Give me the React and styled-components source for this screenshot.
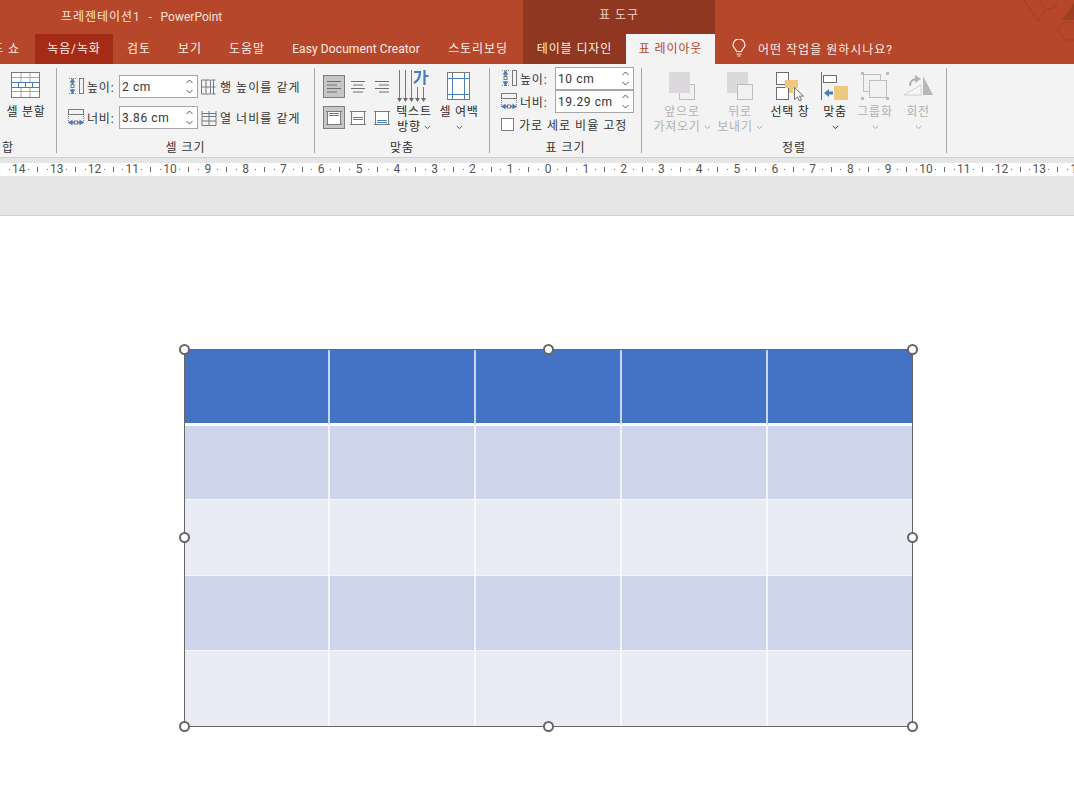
import React from 'react';
import styled, { createGlobalStyle } from 'styled-components';

const GlobalStyle = createGlobalStyle`
  html, body { margin: 0; padding: 0; height: 100%; overflow: hidden; background: #fff; }
  body { font-family: Roboto, 'Noto Sans CJK KR', sans-serif; font-size: 12px; color: #333; }
`;

const Page = styled.div`
  width: 1074px;
  height: 786px;
  overflow: hidden;
  display: flex;
  flex-direction: column;
`;

/* title + tabs */
const Head = styled.div`
  position: relative;
  background: #b7472a;
  height: 64px;
  overflow: hidden;
  flex: none;
`;
const TitleRow = styled.div`
  display: flex;
  height: 34px;
`;
const DocTitle = styled.div`
  width: 462px;
  padding-left: 61px;
  line-height: 34px;
  color: #f6e3dc;
  letter-spacing: 0.95px;
  white-space: pre;
`;
const AppName = styled.span`
  letter-spacing: 0;
`;
const ContextHead = styled.div`
  width: 192px;
  background: #8f3720;
  color: #f0cfc4;
  text-align: center;
  line-height: 30px;
  letter-spacing: 1px;
`;
const TabRow = styled.div`
  display: flex;
  height: 30px;
`;
const Tab = styled.div`
  width: ${p => p.$w}px;
  flex: none;
  display: flex;
  justify-content: ${p => p.$end ? 'flex-end' : 'center'};
  line-height: 30px;
  white-space: nowrap;
  overflow: hidden;
  color: ${p => p.$active ? '#b7472a' : '#fbeee9'};
  letter-spacing: ${p => p.$latin ? '0.1px' : '0.9px'};
  background: ${p => p.$active ? '#f3f3f3' : p.$record ? '#a42c17' : p.$context ? '#8f3720' : 'transparent'};
`;
const TellMe = styled.div`
  display: flex;
  align-items: center;
  gap: 12px;
  padding: 0 0 2px 17px;
  color: #fbeee9;
  letter-spacing: 1px;
`;
const Deco = styled.svg`
  position: absolute;
  right: 0;
  top: 0;
`;

/* ribbon */
const Ribbon = styled.div`
  display: flex;
  flex: none;
  height: 94px;
  box-sizing: border-box;
  background: #f3f3f3;
  border-bottom: 1px solid #cfcfcf;
`;
const Group = styled.div`
  width: ${p => p.$w}px;
  flex: none;
  box-sizing: border-box;
  height: 85px;
  margin-top: 4px;
  display: flex;
  flex-direction: column;
  border-right: 1px solid #a9a9a9;
`;
const GroupBody = styled.div`
  flex: 1;
  display: flex;
  padding-left: ${p => p.$pl || 0}px;
  min-height: 0;
`;
const GroupLabel = styled.div`
  height: 17px;
  line-height: 25px;
  display: flex;
  justify-content: ${p => p.$end ? 'flex-end' : 'center'};
  color: #333;
  letter-spacing: 1px;
  padding-right: ${p => p.$end ? '42px' : '0'};
  white-space: nowrap;
  overflow: ${p => p.$end ? 'hidden' : 'visible'};
`;
const Stack = styled.div`
  display: flex;
  flex-direction: column;
  margin-top: ${p => p.$mt || 0}px;
  padding-top: ${p => p.$pt || 0}px;
  gap: ${p => p.$gap || 0}px;
`;
const FieldRow = styled.div`
  display: flex;
  align-items: center;
  height: 23px;
`;
const IconSlot = styled.span`
  width: 19px;
  flex: none;
  display: flex;
  align-items: center;
  margin-left: ${p => p.$ml || 0}px;
`;
const FieldLabel = styled.span`
  width: ${p => p.$w || 32}px;
  flex: none;
  letter-spacing: 0.8px;
  white-space: nowrap;
`;
const Spinner = styled.div`
  width: 79px;
  height: 23px;
  box-sizing: border-box;
  flex: none;
  border: 1px solid #a6a6a6;
  background: #fff;
  display: flex;
  align-items: center;
  justify-content: space-between;
  padding: 0 3px 0 2px;
  color: #333;
  letter-spacing: 0.6px;
`;
const SpinArrows = styled.svg`
  flex: none;
`;
const EqualLabel = styled.span`
  letter-spacing: 1.05px;
  white-space: nowrap;
`;
const AlignGrid = styled.div`
  display: grid;
  grid-template-columns: repeat(3, 22px);
  grid-auto-rows: 23px;
  column-gap: 2px;
  row-gap: 8px;
  padding-top: 7px;
  width: 70px;
  flex: none;
`;
const AlignCell = styled.div`
  box-sizing: border-box;
  display: flex;
  align-items: center;
  justify-content: center;
  border: 1px solid ${p => p.$on ? '#7f7f7f' : 'transparent'};
  background: ${p => p.$on ? '#c6c6c6' : 'transparent'};
`;
const BigBtn = styled.div`
  width: ${p => p.$w}px;
  flex: none;
  display: flex;
  flex-direction: column;
  align-items: center;
  color: ${p => p.$off ? '#b1b1b1' : '#2b2b2b'};
`;
const BigIcon = styled.div`
  height: ${p => 37 - (p.$pt ?? 4)}px;
  padding-top: ${p => p.$pt ?? 4}px;
  display: flex;
  align-items: flex-start;
  justify-content: center;
`;
const BigText = styled.div`
  line-height: 15px;
  letter-spacing: 0.75px;
  white-space: nowrap;
  display: flex;
  align-items: center;
  gap: 3px;
  height: 15px;
`;
const Check = styled.span`
  width: 13px;
  height: 13px;
  box-sizing: border-box;
  border: 1px solid #7f7f7f;
  background: #fff;
  flex: none;
  margin-right: 5px;
`;
const CheckLabel = styled.span`
  letter-spacing: 1px;
  white-space: nowrap;
`;

/* ruler */
const RulerBand = styled.div`
  flex: none;
  height: 18px;
  box-sizing: border-box;
  padding-top: 5px;
  background: #e6e6e6;
`;
const RulerStrip = styled.div`
  height: 13px;
  background: #fff;
  overflow: hidden;
  display: flex;
  justify-content: center;
  padding-left: 22px;
`;
const RulerCell = styled.div`
  flex: none;
  width: 37.8px;
  height: 13px;
  position: relative;
  display: flex;
  align-items: center;
  justify-content: center;
  font-size: 12px;
  line-height: 13px;
  color: #555;
`;
const RulerMark = styled.i`
  position: absolute;
  left: ${p => p.$x}px;
  top: ${p => p.$tick ? 4 : 6}px;
  width: 1px;
  height: ${p => p.$tick ? 5 : 1}px;
  background: #6a6a6a;
`;
const GreyBand = styled.div`
  flex: none;
  height: 40px;
  box-sizing: border-box;
  background: #e6e6e6;
  border-bottom: 1px solid #d4d4d4;
`;

/* slide */
const Canvas = styled.div`
  flex: 1;
  background: #fff;
  padding: 133px 0 0 184px;
`;
const TableFrame = styled.div`
  position: relative;
  width: 729px;
  height: 378px;
  box-sizing: border-box;
  border: 1px solid #666;
`;
const SlideTable = styled.div`
  display: grid;
  width: 100%;
  height: 100%;
  grid-template-columns: 145px 146px 146px 146px 1fr;
  grid-template-rows: 76px 74px 76px 75px 1fr;
`;
const Cell = styled.div`
  box-sizing: border-box;
  background: ${p => p.$bg};
  border-right: ${p => p.$last ? 'none' : '2px solid rgba(255, 255, 255, 0.7)'};
  border-bottom: ${p => p.$head ? '3px solid #fff' : p.$end ? 'none' : '1px solid #f4f5fa'};
`;
const Handle = styled.span`
  position: absolute;
  left: calc(${p => p.$x}% + ${p => p.$x === 100 ? 1 : 0}px);
  top: calc(${p => p.$y}% + ${p => p.$y === 100 ? 1 : 0}px);
  width: 11px;
  height: 11px;
  margin: -6px 0 0 -6px;
  box-sizing: border-box;
  border-radius: 50%;
  background: #fff;
  border: 2px solid #666;
`;

const GREY = '#7b7b7b';
const BLUE = '#4a7ebb';
const GOLD = '#edc87e';
const OFF = '#dcd9dc';
const OFFL = '#f3f0f4';
const OFFB = '#bdbdbd';

const Chevron = ({ color = '#555' }) => (
  <svg width="7" height="5" viewBox="0 0 7 5" fill="none">
    <path d="M.8 1l2.700 2.600L6.200 1" stroke={color} strokeWidth="1" />
  </svg>
);

const Arrows = () => (
  <SpinArrows width="9" height="17" viewBox="0 0 9 17" fill="none" stroke="#555">
    <path d="M1.500 5L4.500 2l3 3M1.500 12l3 3 3-3" />
  </SpinArrows>
);

const HeightIcon = () => (
  <svg width="16" height="17" viewBox="0 0 16 17" fill="none">
    <rect x="11.500" y=".5" width="4" height="15" stroke={GREY} />
    <path d="M1 .5h8M1 15.500h8" stroke={GREY} strokeDasharray="1 1" />
    <path d="M4.500 1v5M4.500 11v5" stroke={BLUE} strokeWidth="2" />
    <path d="M1.500 4.500l3-4 3 4zM1.500 11.500l3 4 3-4z" fill={BLUE} />
    <rect x="3" y="6.500" width="3" height="3" stroke={GREY} />
  </svg>
);

const WidthIcon = () => (
  <svg width="16" height="17" viewBox="0 0 16 17" fill="none">
    <rect x=".5" y=".5" width="15" height="5" stroke={GREY} />
    <path d="M.5 7v7M15.500 7v7" stroke={GREY} strokeDasharray="1 1" />
    <path d="M1 13.500h5M10 13.500h5" stroke={BLUE} strokeWidth="2" />
    <path d="M4.500 10.500l-4 3 4 3zM11.500 10.500l4 3-4 3z" fill={BLUE} />
    <rect x="6.500" y="12" width="3" height="3" stroke={GREY} />
  </svg>
);

const EqualRowIcon = () => (
  <svg width="16" height="16" viewBox="0 0 16 16" fill="none">
    <path d="M.5 1v14h9V1zM.5 8h9M5 1v14" stroke={GREY} />
    <path d="M12.500 1v14M10.500 1h4M10.500 15h4M10.500 8h4" stroke={BLUE} />
  </svg>
);

const EqualColIcon = () => (
  <svg width="16" height="16" viewBox="0 0 16 16" fill="none">
    <path d="M1 6.500v9h14v-9zM1 11h14M8 6.500v9" stroke={GREY} />
    <path d="M1 3.500h14M1 1v5M8 1v5M15 1v5" stroke={BLUE} />
  </svg>
);

const SplitIcon = () => (
  <svg width="30" height="26" viewBox="0 0 30 26" fill="none">
    <rect x=".5" y=".5" width="28" height="25" fill="#fff" stroke={GREY} />
    <path d="M1 5.500h27M1 19.500h27M10 1v10M19 1v10M10 16v9M19 16v9" stroke="#a6a6a6" />
    <rect x=".5" y="10.500" width="28" height="5" fill="#fff" stroke={BLUE} />
    <path d="M7.500 11v4M14.500 11v4M21.500 11v4" stroke={BLUE} />
  </svg>
);

const LinesIcon = ({ align }) => {
  const lines = align === 'left'
    ? ['M3 4.500h14', 'M3 8h10', 'M3 11.500h14', 'M3 15h10']
    : align === 'center'
      ? ['M3 4.500h14', 'M5 8h10', 'M3 11.500h14', 'M5 15h10']
      : ['M3 4.500h14', 'M7 8h10', 'M3 11.500h14', 'M7 15h10'];
  return (
    <svg width="20" height="19" viewBox="0 0 20 19" fill="none" stroke="#6e6e6e">
      {lines.map(d => <path key={d} d={d} />)}
    </svg>
  );
};

const VAlignIcon = ({ pos }) => {
  const y = pos === 'top' ? 3 : pos === 'mid' ? 7 : 10;
  return (
    <svg width="16" height="16" viewBox="0 0 16 16" fill="none">
      <rect x="1.500" y="1.500" width="13" height="13" fill="#fff" stroke={GREY} />
      <path d="M0 1.500h3M13 1.500h3M0 14.500h3M13 14.500h3" stroke={GREY} />
      <path d={`M3 ${y}.5h10M3 ${y + 2}.5h10`} stroke={BLUE} />
    </svg>
  );
};

const TextDirIcon = () => (
  <svg width="34" height="33" viewBox="0 0 34 33" fill="none">
    {[2, 8, 14, 20, 26].map((x, i) => (
      <g key={x}>
        <path d={`M${x + 0.5} ${i < 3 ? 0 : 17}V30`} stroke="#7a7a7a" />
        <path d={`M${x - 2} 28l2.500 4 2.500-4z`} fill="#6a6a6a" />
      </g>
    ))}
    <path d="M17 2h6c0 5-2 9-6 11M27.500 0v15M27.500 6h4" stroke={BLUE} strokeWidth="2.200" />
  </svg>
);

const MarginIcon = () => (
  <svg width="24" height="28" viewBox="0 0 24 28" fill="none">
    <rect x=".5" y=".5" width="22" height="27" fill="#fff" stroke={GREY} />
    <path d="M1 6.500h21M1 22.500h21M5.500 1v26M17.500 1v26" stroke={BLUE} />
  </svg>
);

const ForwardIcon = () => (
  <svg width="27" height="29" viewBox="0 0 27 29" fill="none">
    <rect x="10.500" y="12.500" width="15" height="15" fill={OFFL} stroke={OFFB} />
    <rect x="0" y="0" width="21" height="21" fill={OFF} />
  </svg>
);

const BackwardIcon = () => (
  <svg width="27" height="29" viewBox="0 0 27 29" fill="none">
    <rect x="0" y="0" width="21" height="21" fill={OFF} />
    <rect x="10.500" y="12.500" width="15" height="15" fill={OFFL} stroke={OFFB} />
  </svg>
);

const SelectionIcon = () => (
  <svg width="29" height="29" viewBox="0 0 29 29" fill="none">
    <rect x=".5" y=".5" width="12" height="12" fill="#fff" stroke="#6e6e6e" />
    <rect x=".5" y="15.500" width="12" height="12" fill="#fff" stroke="#6e6e6e" />
    <path d="M9 8h13v8h-5v5h-4v-5H9z" fill={GOLD} />
    <path d="M18.500 15.500v12l3-2.600 2 4.200 2-1-2-4h4z" fill="#fff" stroke="#6e6e6e" />
  </svg>
);

const AlignIcon = () => (
  <svg width="28" height="29" viewBox="0 0 28 29" fill="none">
    <path d="M.5 0v28" stroke="#6e6e6e" />
    <rect x="2.500" y="3.500" width="13" height="7" fill="#fff" stroke="#6e6e6e" />
    <rect x="13" y="14" width="14" height="14" fill={GOLD} />
    <path d="M3 21l5-4v2.500h4v3H8V25z" fill={BLUE} />
  </svg>
);

const GroupIcon = () => (
  <svg width="28" height="29" viewBox="0 0 28 29" fill="none">
    <rect x="2.500" y="2.500" width="17" height="17" fill={OFFL} stroke={OFFB} />
    <rect x="8.500" y="8.500" width="17" height="17" fill={OFFL} stroke={OFFB} />
    <path d="M0 0h3v3H0zM25 0h3v3h-3zM0 25h3v3H0zM25 25h3v3h-3z" fill={OFFB} />
  </svg>
);

const RotateIcon = () => (
  <svg width="31" height="24" viewBox="0 -3 31 24" fill="none">
    <path d="M1 20l17-10v10z" fill="#f7f7f7" stroke="#d0d0d0" />
    <path d="M20 1v19h10z" fill="#b8b8b8" />
    <path d="M7 11c0-5 3-7 7-7" stroke="#b5b5b5" strokeWidth="2" />
    <path d="M12 0l6 4-6 4z" fill="#b5b5b5" />
  </svg>
);

const Bulb = () => (
  <svg width="14" height="18" viewBox="0 0 14 18" fill="none" stroke="#fbeee9" strokeWidth="1.200">
    <path d="M4.500 12.500C4.200 10 1 9 1 6a6 6 0 0112 0c0 3-3.200 4-3.500 6.500z" />
    <path d="M4.500 15h5M5.500 17h3" />
  </svg>
);

const ruler = [];
for (let i = 15; i >= 1; i--) ruler.push(i);
for (let i = 0; i <= 15; i++) ruler.push(i);

const rows = [
  { bg: '#4472c4', head: true },
  { bg: '#cfd5ea' },
  { bg: '#e9ebf5' },
  { bg: '#cfd5ea' },
  { bg: '#e9ebf5', end: true },
];

const handles = [
  [0, 0], [50, 0], [100, 0],
  [0, 50], [100, 50],
  [0, 100], [50, 100], [100, 100],
];

export default function App() {
  return (
    <Page>
      <GlobalStyle />
      <Head>
        <TitleRow>
          <DocTitle>프레젠테이션1  -  <AppName>PowerPoint</AppName></DocTitle>
          <ContextHead>표 도구</ContextHead>
        </TitleRow>
        <TabRow>
          <Tab $w={20} $end>드 쇼</Tab>
          <Tab $w={15} />
          <Tab $w={78} $record>녹음/녹화</Tab>
          <Tab $w={52}>검토</Tab>
          <Tab $w={50}>보기</Tab>
          <Tab $w={64}>도움말</Tab>
          <Tab $w={154} $latin>Easy Document Creator</Tab>
          <Tab $w={90}>스토리보딩</Tab>
          <Tab $w={103} $context>테이블 디자인</Tab>
          <Tab $w={89} $active>표 레이아웃</Tab>
          <TellMe><Bulb />어떤 작업을 원하시나요?</TellMe>
        </TabRow>
        <Deco width="50" height="42" viewBox="0 0 50 42" fill="none" stroke="#a5401f" strokeWidth="1">
          <path d="M0 0l14 21 8-13" />
          <circle cx="25" cy="0" r="9" />
          <path d="M38 20L50 3v17z" fill="#9e3f24" stroke="none" />
          <path d="M50 23l-10-1-7 8 9 10h8" />
        </Deco>
      </Head>

      <Ribbon>
        <Group $w={57}>
          <GroupBody>
            <BigBtn $w={52}>
              <BigIcon><SplitIcon /></BigIcon>
              <BigText>셀 분할</BigText>
            </BigBtn>
          </GroupBody>
          <GroupLabel $end>병합</GroupLabel>
        </Group>

        <Group $w={258}>
          <GroupBody $pl={11}>
            <Stack $pt={7} $gap={8}>
              <FieldRow>
                <IconSlot><HeightIcon /></IconSlot>
                <FieldLabel>높이:</FieldLabel>
                <Spinner>2 cm<Arrows /></Spinner>
                <IconSlot $ml={3}><EqualRowIcon /></IconSlot>
                <EqualLabel>행 높이를 같게</EqualLabel>
              </FieldRow>
              <FieldRow>
                <IconSlot><WidthIcon /></IconSlot>
                <FieldLabel>너비:</FieldLabel>
                <Spinner>3.86 cm<Arrows /></Spinner>
                <IconSlot $ml={3}><EqualColIcon /></IconSlot>
                <EqualLabel>열 너비를 같게</EqualLabel>
              </FieldRow>
            </Stack>
          </GroupBody>
          <GroupLabel>셀 크기</GroupLabel>
        </Group>

        <Group $w={175}>
          <GroupBody $pl={8}>
            <AlignGrid>
              <AlignCell $on><LinesIcon align="left" /></AlignCell>
              <AlignCell><LinesIcon align="center" /></AlignCell>
              <AlignCell><LinesIcon align="right" /></AlignCell>
              <AlignCell $on><VAlignIcon pos="top" /></AlignCell>
              <AlignCell><VAlignIcon pos="mid" /></AlignCell>
              <AlignCell><VAlignIcon pos="bottom" /></AlignCell>
            </AlignGrid>
            <BigBtn $w={42}>
              <BigIcon $pt={2}><TextDirIcon /></BigIcon>
              <BigText>텍스트</BigText>
              <BigText>방향 <Chevron /></BigText>
            </BigBtn>
            <BigBtn $w={48}>
              <BigIcon><MarginIcon /></BigIcon>
              <BigText>셀 여백</BigText>
              <BigText><Chevron /></BigText>
            </BigBtn>
          </GroupBody>
          <GroupLabel>맞춤</GroupLabel>
        </Group>

        <Group $w={152}>
          <GroupBody $pl={11}>
            <Stack $mt={-1}>
              <FieldRow>
                <IconSlot><HeightIcon /></IconSlot>
                <FieldLabel $w={35}>높이:</FieldLabel>
                <Spinner>10 cm<Arrows /></Spinner>
              </FieldRow>
              <FieldRow>
                <IconSlot><WidthIcon /></IconSlot>
                <FieldLabel $w={35}>너비:</FieldLabel>
                <Spinner>19.29 cm<Arrows /></Spinner>
              </FieldRow>
              <FieldRow>
                <Check />
                <CheckLabel>가로 세로 비율 고정</CheckLabel>
              </FieldRow>
            </Stack>
          </GroupBody>
          <GroupLabel>표 크기</GroupLabel>
        </Group>

        <Group $w={305}>
          <GroupBody $pl={11}>
            <BigBtn $w={58} $off>
              <BigIcon><ForwardIcon /></BigIcon>
              <BigText>앞으로</BigText>
              <BigText>가져오기 <Chevron color="#aaa" /></BigText>
            </BigBtn>
            <BigBtn $w={58} $off>
              <BigIcon><BackwardIcon /></BigIcon>
              <BigText>뒤로</BigText>
              <BigText>보내기 <Chevron color="#aaa" /></BigText>
            </BigBtn>
            <BigBtn $w={42}>
              <BigIcon><SelectionIcon /></BigIcon>
              <BigText>선택 창</BigText>
            </BigBtn>
            <BigBtn $w={48}>
              <BigIcon><AlignIcon /></BigIcon>
              <BigText>맞춤</BigText>
              <BigText><Chevron color="#333" /></BigText>
            </BigBtn>
            <BigBtn $w={32} $off>
              <BigIcon><GroupIcon /></BigIcon>
              <BigText>그룹화</BigText>
              <BigText><Chevron color="#aaa" /></BigText>
            </BigBtn>
            <BigBtn $w={54} $off>
              <BigIcon><RotateIcon /></BigIcon>
              <BigText>회전</BigText>
              <BigText><Chevron color="#aaa" /></BigText>
            </BigBtn>
          </GroupBody>
          <GroupLabel>정렬</GroupLabel>
        </Group>
      </Ribbon>

      <RulerBand>
        <RulerStrip>
          {ruler.map((n, i) => (
            <RulerCell key={i}>
              {n}
              <RulerMark $x={9} />
              <RulerMark $x={28} />
              <RulerMark $x={37} $tick />
            </RulerCell>
          ))}
        </RulerStrip>
      </RulerBand>
      <GreyBand />

      <Canvas>
        <TableFrame>
          <SlideTable>
            {rows.map((row, r) =>
              [0, 1, 2, 3, 4].map(c => (
                <Cell key={`${r}-${c}`} $bg={row.bg} $head={row.head} $end={row.end} $last={c === 4} />
              ))
            )}
          </SlideTable>
          {handles.map(([x, y]) => <Handle key={`${x}-${y}`} $x={x} $y={y} />)}
        </TableFrame>
      </Canvas>
    </Page>
  );
}
